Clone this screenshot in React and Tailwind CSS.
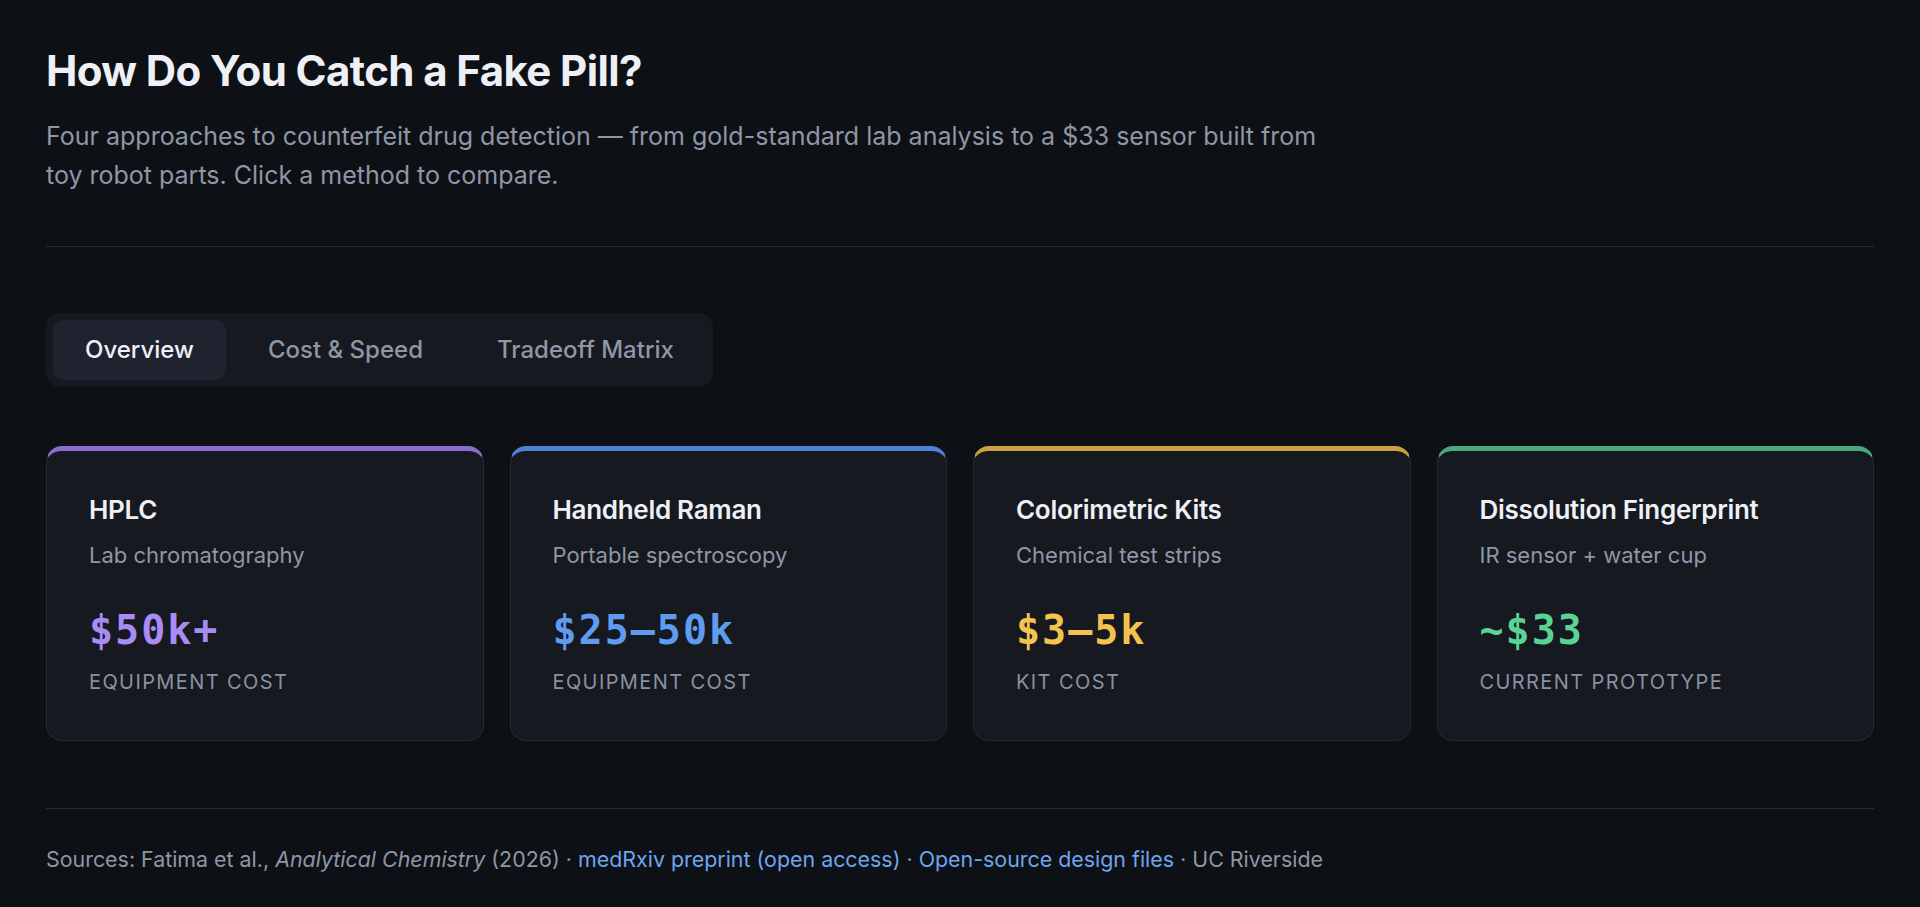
export default function App() {
  const cards = [
    { title: "HPLC", sub: "Lab chromatography", value: "$50k+", label: "Equipment cost", bar: "border-t-[#8a6ccc]", color: "text-[#a98bf5]" },
    { title: "Handheld Raman", sub: "Portable spectroscopy", value: "$25–50k", label: "Equipment cost", bar: "border-t-[#4f80d4]", color: "text-[#5f9cf0]" },
    { title: "Colorimetric Kits", sub: "Chemical test strips", value: "$3–5k", label: "Kit cost", bar: "border-t-[#c9a244]", color: "text-[#f2c34e]" },
    { title: "Dissolution Fingerprint", sub: "IR sensor + water cup", value: "~$33", label: "Current prototype", bar: "border-t-[#4aa87a]", color: "text-[#5ad494]" },
  ];
  return (
    <div className="min-h-[907px] bg-[#0d1015] px-[46px] pt-[45px] pb-[40px] font-['Inter','Noto_Sans',sans-serif] text-[#eceef3]">
      <h1 className="text-[42px] leading-[52px] font-bold tracking-[-0.6px] text-[#eef0f5]">How Do You Catch a Fake Pill?</h1>
      <p className="mt-[20px] max-w-[1295px] text-[25px] leading-[39px] text-[#8f96a5]">
        Four approaches to counterfeit drug detection — from gold-standard lab analysis to a $33 sensor built from toy robot parts. Click a method to compare.
      </p>
      <div className="mt-[51px] h-px bg-[#262b35]" />

      <div className="mt-[66px] inline-flex gap-[10px] rounded-[14px] bg-[#161920] p-[7px]">
        <button className="h-[60px] rounded-[10px] bg-[#1f2330] px-[32px] text-[24px] font-medium text-[#eef0f5]">Overview</button>
        <button className="h-[60px] rounded-[10px] px-[32px] text-[24px] font-medium text-[#8f96a5]">Cost &amp; Speed</button>
        <button className="h-[60px] rounded-[10px] px-[32px] text-[24px] font-medium text-[#8f96a5]">Tradeoff Matrix</button>
      </div>

      <div className="mt-[59px] grid grid-cols-4 gap-[26px]">
        {cards.map((c) => (
          <div key={c.title} className={`rounded-[16px] border border-[#262a34] border-t-[5px] ${c.bar} bg-[#161920] px-[42px] pt-[42px] pb-[44px]`}>
            <div className="text-[26px] leading-[34px] font-semibold tracking-[-0.3px] text-[#eef0f5]">{c.title}</div>
            <div className="mt-[12px] text-[22px] leading-[33px] text-[#8f96a5]">{c.sub}</div>
            <div className={`mt-[34px] font-['DejaVu_Sans_Mono','Liberation_Mono',monospace] text-[40px] leading-[48px] font-bold tracking-[2px] ${c.color}`}>{c.value}</div>
            <div className="mt-[14px] text-[20px] leading-[28px] uppercase tracking-[1.4px] text-[#8a91a0]">{c.label}</div>
          </div>
        ))}
      </div>

      <div className="mt-[67px] h-px bg-[#262b35]" />
      <p className="mt-[35px] text-[21.4px] leading-[30px] text-[#8f96a5]">
        Sources: Fatima et al., <span className="italic">Analytical Chemistry</span> (2026) · <a className="text-[#6fa5ee]">medRxiv preprint (open access)</a> · <a className="text-[#6fa5ee]">Open-source design files</a> · UC Riverside
      </p>
    </div>
  );
}
